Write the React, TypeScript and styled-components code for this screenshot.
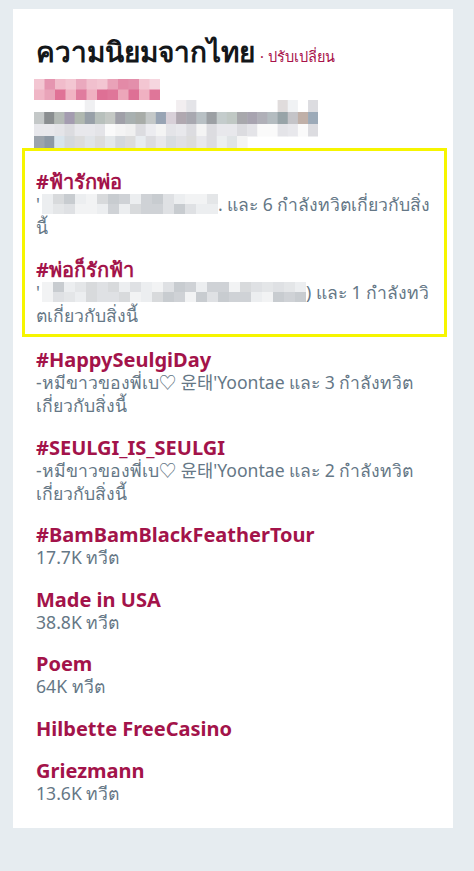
import React from 'react'
import styled, { createGlobalStyle } from 'styled-components'

const GlobalStyle = createGlobalStyle`
  html, body {
    margin: 0;
    padding: 0;
    background: #e6ecf0;
  }
  body {
    font-family: "Noto Sans", "Noto Sans CJK KR", sans-serif;
  }
`

const Page = styled.div`
  width: 474px;
  height: 871px;
  box-sizing: border-box;
  padding: 9px 21px 0 13px;
  background: #e6ecf0;
`

const Card = styled.div`
  background: #ffffff;
  padding: 27px 6px 23px 9px;
`

const Header = styled.div`
  display: flex;
  align-items: baseline;
  gap: 5px;
  padding-left: 14px;
  height: 30px;
  line-height: 30px;
  white-space: nowrap;
`

const HeaderTitle = styled.h3`
  margin: 0;
  font-size: 28px;
  font-weight: 700;
  color: #14171a;
`

const ChangeLink = styled.a`
  font-size: 14.5px;
  color: #a8124a;
  text-decoration: none;
`

const Redacted = styled.div`
  margin-top: 13px;
  padding-left: 12px;
  line-height: 0;
`

const Highlight = styled.div`
  border: 3px solid #f6f500;
  padding: 19px 0 7px 11px;
  display: flex;
  flex-direction: column;
  gap: 19px;
`

const List = styled.div`
  display: flex;
  flex-direction: column;
  gap: 18.6px;
  padding: 11px 0 0 14px;
`

const Trend = styled.div`
  display: flex;
  flex-direction: column;
`

const TrendName = styled.a`
  font-size: 20px;
  font-weight: 700;
  line-height: 23px;
  color: #a3134a;
  text-decoration: none;
  white-space: nowrap;
`

const TrendMeta = styled.div`
  font-size: 17.6px;
  line-height: 23px;
  color: #657786;
  white-space: nowrap;
`

const InlineBlur = styled.svg`
  display: inline-block;
  vertical-align: middle;
  margin: -4px 0 0 2px;
`

type MosaicProps = { rows: string[][]; cell: number; height: number }

const Mosaic = ({ rows, cell, height }: MosaicProps) => {
  const w = Math.max(...rows.map(r => r.length)) * cell
  return (
    <svg width={w} height={rows.length * height} style={{ display: 'block' }}>
      {rows.map((r, y) =>
        r.map((c, x) => <rect key={`${x}-${y}`} x={x * cell} y={y * height} width={cell + 0.5} height={height + 0.5} fill={c} />)
      )}
    </svg>
  )
}

const seeded = (seed: number) => {
  let s = seed
  return () => {
    s = (s * 9301 + 49297) % 233280
    return s / 233280
  }
}

const pickRow = (n: number, palette: string[], seed: number) => {
  const rnd = seeded(seed)
  return Array.from({ length: n }, () => palette[Math.floor(rnd() * palette.length)])
}

const pinkRows = [
  ['#f3c6d2', '#e595b0', '#f1bccb', '#f3c6d2', '#eaa9be', '#f1c0ce', '#f3c6d2', '#e9a2b8', '#e38aa7', '#e38fab', '#f3c6d2', '#f6d6df'],
  ['#f0b6c6', '#e9a4b9', '#e07296', '#f1b3c3', '#e07c9e', '#f0b0c1', '#de7095', '#df7699', '#eca6b9', '#de7095', '#f0b1c2', '#df7699'],
]

const greyRows = [
  ['#fff', '#fff', '#fff', '#fff', '#fff', '#f0f0f2', '#fff', '#fff', '#fff', '#fff', '#fff', '#fff', '#fff', '#fff', '#f2eef0', '#e4e4e8', '#fff', '#fff', '#fff', '#fff', '#fff', '#fff', '#fff', '#fff', '#e0dcdc', '#f0f2f4', '#fff', '#dcdce0'],
  ['#c4c8c8', '#8a8e90', '#b4bab6', '#a49cb0', '#b0b8b0', '#98a0a8', '#b8c0bc', '#c4c8c4', '#a0a0a8', '#a8b0b0', '#a8aca8', '#c4c8c8', '#98a4b4', '#d8d0d8', '#b0a8b0', '#a8a8b0', '#b8c0c4', '#9ca0a4', '#c4cccc', '#c0c8c4', '#a8a8ac', '#a8a4b0', '#b0b0b8', '#b4bcc0', '#98a4a8', '#c4c4c8', '#c0b0a8', '#9caab8'],
  pickRow(28, ['#e4e4e8', '#dcdce0', '#f0f0f0', '#e8e8ec', '#f4f4f4', '#ececf0', '#fafafa'], 7),
  ['#9ca4ac', '#8c98a4', '#d8e4ec', '#d4d8dc', '#dcdcdc', '#e0e4e8', '#dcdcdc', '#e4e8ea', '#d4d8dc', '#dcdcdc', '#e8ecf0', '#dcdce0', '#e8e8ec', '#d8dce0', '#e0e0e4', '#dcdcdc', '#e8e8ec', '#dcdce0', '#eceff0', '#e0e4e6', '#f4f4f4'],
]

const blurPalette = ['#e4e6e8', '#d8dadc', '#eceef0', '#cfd2d6', '#f2f3f4', '#dfe1e4', '#c8ccd0']

const BlurName = ({ cells, seed }: { cells: number; seed: number }) => (
  <InlineBlur width={cells * 11} height={20}>
    {[0, 1].map(y =>
      pickRow(cells, blurPalette, seed + y).map((c, x) => (
        <rect key={`${x}-${y}`} x={x * 11} y={y * 10} width={11.5} height={10.5} fill={c} />
      ))
    )}
  </InlineBlur>
)

export default function App() {
  return (
    <Page>
      <GlobalStyle />
      <Card>
        <Header>
          <HeaderTitle>ความนิยมจากไทย</HeaderTitle>
          <ChangeLink>· ปรับเปลี่ยน</ChangeLink>
        </Header>
        <Redacted>
          <Mosaic rows={pinkRows} cell={10.5} height={10.5} />
          <Mosaic rows={greyRows} cell={10.15} height={12} />
        </Redacted>
        <Highlight>
          <Trend>
            <TrendName>#ฟ้ารักพ่อ</TrendName>
            <TrendMeta>'<BlurName cells={16} seed={3} />. และ 6 กำลังทวิตเกี่ยวกับสิ่ง</TrendMeta>
            <TrendMeta>นี้</TrendMeta>
          </Trend>
          <Trend>
            <TrendName>#พ่อก็รักฟ้า</TrendName>
            <TrendMeta>'<BlurName cells={24} seed={11} />) และ 1 กำลังทวิ</TrendMeta>
            <TrendMeta>ตเกี่ยวกับสิ่งนี้</TrendMeta>
          </Trend>
        </Highlight>
        <List>
          <Trend>
            <TrendName>#HappySeulgiDay</TrendName>
            <TrendMeta>-หมีขาวของพี่เบ♡ 윤태'Yoontae และ 3 กำลังทวิต</TrendMeta>
            <TrendMeta>เกี่ยวกับสิ่งนี้</TrendMeta>
          </Trend>
          <Trend>
            <TrendName>#SEULGI_IS_SEULGI</TrendName>
            <TrendMeta>-หมีขาวของพี่เบ♡ 윤태'Yoontae และ 2 กำลังทวิต</TrendMeta>
            <TrendMeta>เกี่ยวกับสิ่งนี้</TrendMeta>
          </Trend>
          <Trend>
            <TrendName>#BamBamBlackFeatherTour</TrendName>
            <TrendMeta>17.7K ทวีต</TrendMeta>
          </Trend>
          <Trend>
            <TrendName>Made in USA</TrendName>
            <TrendMeta>38.8K ทวีต</TrendMeta>
          </Trend>
          <Trend>
            <TrendName>Poem</TrendName>
            <TrendMeta>64K ทวีต</TrendMeta>
          </Trend>
          <Trend>
            <TrendName>Hilbette FreeCasino</TrendName>
          </Trend>
          <Trend>
            <TrendName>Griezmann</TrendName>
            <TrendMeta>13.6K ทวีต</TrendMeta>
          </Trend>
        </List>
      </Card>
    </Page>
  )
}
